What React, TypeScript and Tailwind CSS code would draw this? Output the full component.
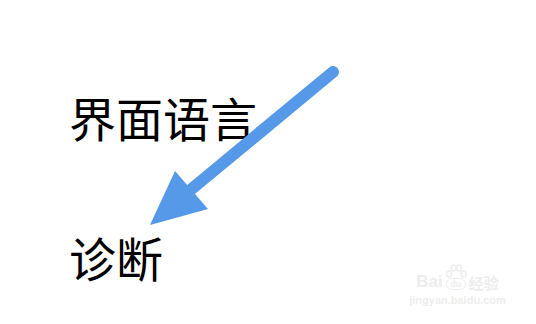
import React from "react";

const Arrow = () => (
  <svg className="absolute left-0 top-0" width="536" height="324" viewBox="0 0 536 324">
    <line x1="333" y1="72" x2="188" y2="192" stroke="#5599e8" strokeWidth="12" strokeLinecap="round" />
    <polygon points="150,225 175,171 208,209" fill="#5599e8" />
  </svg>
);

const Watermark = () => (
  <div className="absolute left-[411px] top-[264px] flex w-[93px] flex-col items-center text-[#ededed]" style={{ fontFamily: "'Liberation Sans', sans-serif" }}>
    <div className="flex items-end gap-[2px] leading-none">
      <span className="text-[17px] font-bold">Bai</span>
      <div className="flex flex-col items-center">
        <svg width="22" height="14" viewBox="0 0 22 14" fill="none" stroke="#ededed" strokeWidth="1.5">
          <ellipse cx="4" cy="10" rx="2.5" ry="3" />
          <ellipse cx="8.5" cy="4" rx="2.5" ry="3" />
          <ellipse cx="14" cy="4" rx="2.5" ry="3" />
          <ellipse cx="18.5" cy="10" rx="2.5" ry="3" />
        </svg>
        <span className="flex h-[12px] w-[20px] items-center justify-center rounded-full border border-[#ededed] text-[9px] font-bold">du</span>
      </div>
      <span className="text-[15px] font-bold" style={{ fontFamily: "'Noto Sans CJK SC', sans-serif" }}>经验</span>
    </div>
    <span className="mt-[5px] text-[11px] font-bold leading-none">jingyan.baidu.com</span>
  </div>
);

const App = () => {
  return (
    <div className="relative h-[324px] w-[536px] overflow-hidden bg-white" style={{ fontFamily: "'Noto Sans CJK SC', 'Noto Sans', sans-serif" }}>
      <div className="flex flex-col gap-[93px] pl-[69px] pt-[93px] text-[47px] leading-none text-black">
        <span>界面语言</span>
        <span>诊断</span>
      </div>
      <Arrow />
      <Watermark />
    </div>
  );
};

export default App;
